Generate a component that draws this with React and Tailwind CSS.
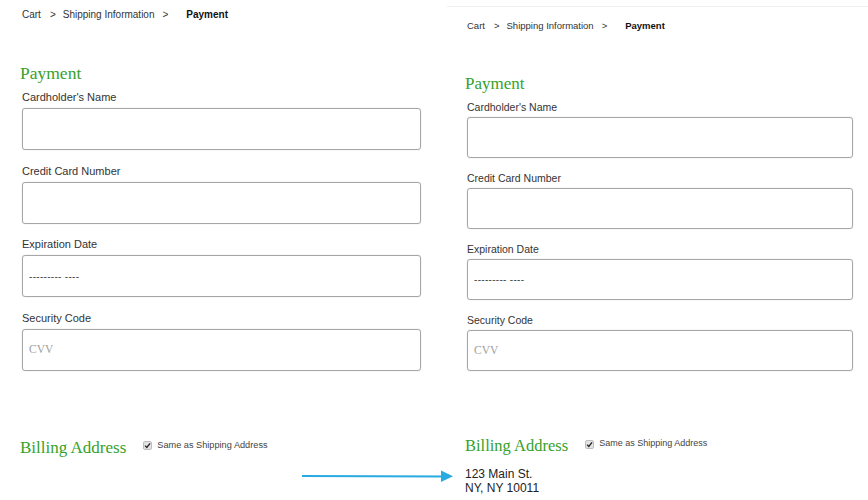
import React from "react";

const sans = { fontFamily: '"Liberation Sans", Arial, sans-serif' };

function Check({ size }) {
  return (
    <span className={`inline-flex items-center justify-center rounded-[2px] border border-[#bdbdbd] bg-[#e4e4e4] ${size}`}>
      <svg viewBox="0 0 10 10" className="w-[7px] h-[7px]">
        <path d="M1.5 5.2 L4 7.8 L8.6 1.8" fill="none" stroke="#222" strokeWidth="1.8" />
      </svg>
    </span>
  );
}

function Field({ label, children, big }) {
  return (
    <div>
      <div className={big ? "text-[11px] leading-[14px] mb-[4px] text-[#333]" : "text-[10.5px] leading-[14px] mb-[3px] text-[#333]"}>{label}</div>
      <div
        className={
          big
            ? "h-[42px] mb-[13.6px] rounded-[3px] border border-[#a6a6a6] shadow-[0_0_1px_#bbb] flex items-center pl-[6px]"
            : "h-[41px] mb-[13px] rounded-[3px] border border-[#a6a6a6] shadow-[0_0_1px_#bbb] flex items-center pl-[6px]"
        }
      >
        {children}
      </div>
    </div>
  );
}

function Panel({ big }) {
  const bc = big ? "text-[10px]" : "text-[9.5px]";
  return (
    <>
      <div className={`${bc} ${big ? "mt-[1px]" : ""} leading-[12px] text-[#333] flex`}>
        <span>Cart</span>
        <span className="ml-[9px]">&gt;</span>
        <span className="ml-[7px]">Shipping Information</span>
        <span className="ml-[8px]">&gt;</span>
        <span className="ml-[18px] font-bold text-[#111]">Payment</span>
      </div>
      <div
        className={big ? "-ml-[2px] mt-[42px] mb-[7px] text-[17.5px] leading-[20px] text-[#36a12b]" : "-ml-[2px] mt-[42px] mb-[6px] text-[17px] leading-[20px] text-[#36a12b]"}
        style={{ fontFamily: '"Liberation Serif", Georgia, serif' }}
      >
        Payment
      </div>
      <Field label="Cardholder's Name" big={big} />
      <Field label="Credit Card Number" big={big} />
      <Field label="Expiration Date" big={big}>
        <span className="text-[10px] text-[#444] tracking-[0.3px]">--------- ----</span>
      </Field>
      <Field label="Security Code" big={big}>
        <span className="text-[11.5px] text-[#a0a0a0]" style={{ fontFamily: '"Liberation Serif", serif' }}>CVV</span>
      </Field>
      <div className={big ? "mt-[67px] flex items-center -ml-[2px]" : "mt-[65px] flex items-center -ml-[2px]"}>
        <span
          className={big ? "text-[17px] leading-[20px] text-[#36a12b]" : "text-[16.5px] leading-[20px] text-[#36a12b]"}
          style={{ fontFamily: '"Liberation Serif", Georgia, serif' }}
        >
          Billing Address
        </span>
        <span className={big ? "ml-[17px] flex items-center -mt-[4px]" : "ml-[17px] flex items-center -mt-[4px]"}>
          <Check size="w-[9px] h-[9px]" />
          <span className={big ? "ml-[5px] text-[9.2px] text-[#444]" : "ml-[5px] text-[9px] text-[#444]"}>Same as Shipping Address</span>
        </span>
      </div>
      {!big && (
        <div className="mt-[11px] -ml-[2px] text-[12px] leading-[14px] text-[#222]">
          <div>123 Main St.</div>
          <div>NY, NY 10011</div>
        </div>
      )}
    </>
  );
}

export default function App() {
  return (
    <div className="relative w-[868px] h-[500px] bg-white overflow-hidden flex" style={sans}>
      <div className="w-[447px] shrink-0 pl-[22px] pr-[26px] pt-[8px]">
        <Panel big />
      </div>
      <div className="w-[421px] shrink-0 mt-[6px] border-t border-[#f0f0f0] pt-[13px] pl-[20px] pr-[15px]">
        <Panel big={false} />
      </div>
      <svg className="absolute left-[300px] top-[469px]" width="156" height="14" viewBox="0 0 156 14">
        <line x1="2" y1="7" x2="146" y2="7.5" stroke="#29abe2" strokeWidth="2" />
        <polygon points="141,1.5 153,7.3 141,13" fill="#29abe2" />
      </svg>
    </div>
  );
}
